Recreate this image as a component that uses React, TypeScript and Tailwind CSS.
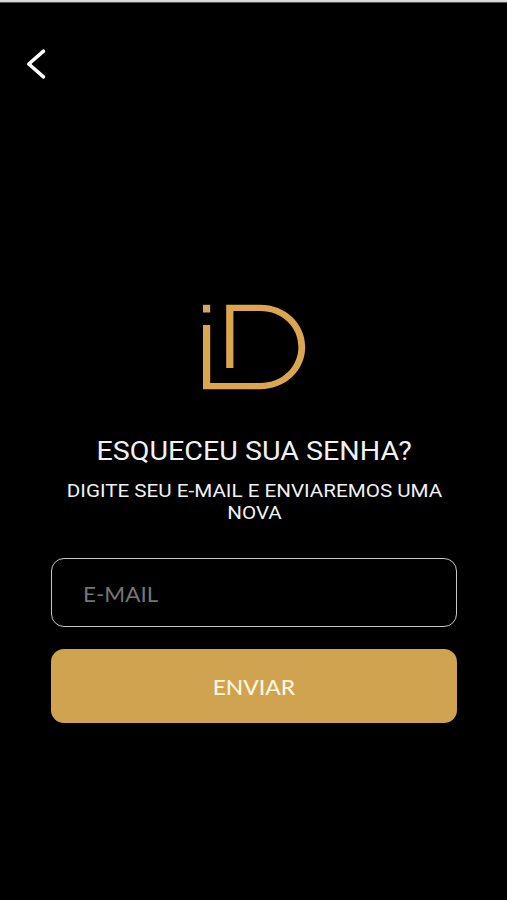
export default function App() {
  return (
    <main className="flex h-[900px] w-[507px] flex-col overflow-hidden border-t-2 border-[#d7dada] bg-black font-['Roboto','Liberation_Sans',sans-serif] text-[#f1f1f1]">
      <div className="h-px shrink-0 bg-[#555]" />
      <header className="flex h-[301px] shrink-0 items-start pt-[45px] pl-[25px]">
        <button type="button" aria-label="Voltar">
          <svg className="block" width="24" height="32" viewBox="0 0 24 32" fill="none" stroke="#fff" strokeWidth="3.6" strokeLinecap="round" strokeLinejoin="round">
            <path d="M18.5 3.2 L3.8 16 L18.5 28.8" />
          </svg>
        </button>
      </header>
      <section className="flex flex-col items-center pl-px">
        <svg className="block" width="104" height="86" viewBox="0 0 104 86">
          <path d="M1 .8 H8.2 V8.5 H1 Z" fill="#d3a766" />
          <path fillRule="evenodd" fill="#dba64f" d="M1 21 H8.2 V79 H58 C80 79 96.4 63 96.4 43 S80 7.1 58 7.1 H31.4 V64 H24.2 V.8 H58 C84 .8 103.2 20 103.2 43 S84 85.2 58 85.2 H1 Z" />
        </svg>
        <h1 className="mt-[46px] scale-x-[1.102] text-[26px] leading-[30px] font-normal whitespace-nowrap">ESQUECEU SUA SENHA?</h1>
        <p className="mt-[14px] w-[405px] scale-x-[1.085] text-center text-[19px] leading-[21.5px]">
          DIGITE SEU E-MAIL E ENVIAREMOS UMA<br />NOVA
        </p>
      </section>
      <form className="mt-[35px] ml-[51px] flex w-[406px] flex-col gap-[22px] font-['Lato','Liberation_Sans',sans-serif]">
        <label className="flex h-[69px] items-center rounded-[13px] border-[1.5px] border-[#c8c8c8] px-[31px] pt-[2px]">
          <input type="email" aria-label="E-mail" placeholder="E-MAIL" className="w-[300px] origin-left scale-x-[1.07] bg-transparent text-[21px] outline-none placeholder:text-[#757575]" />
        </label>
        <button type="button" className="h-[74px] rounded-[13px] bg-[#d0a350] pt-[2px] text-[21.5px] text-[#fff6df]">
          <span className="inline-block scale-x-[1.06] font-medium">ENVIAR</span>
        </button>
      </form>
    </main>
  );
}
